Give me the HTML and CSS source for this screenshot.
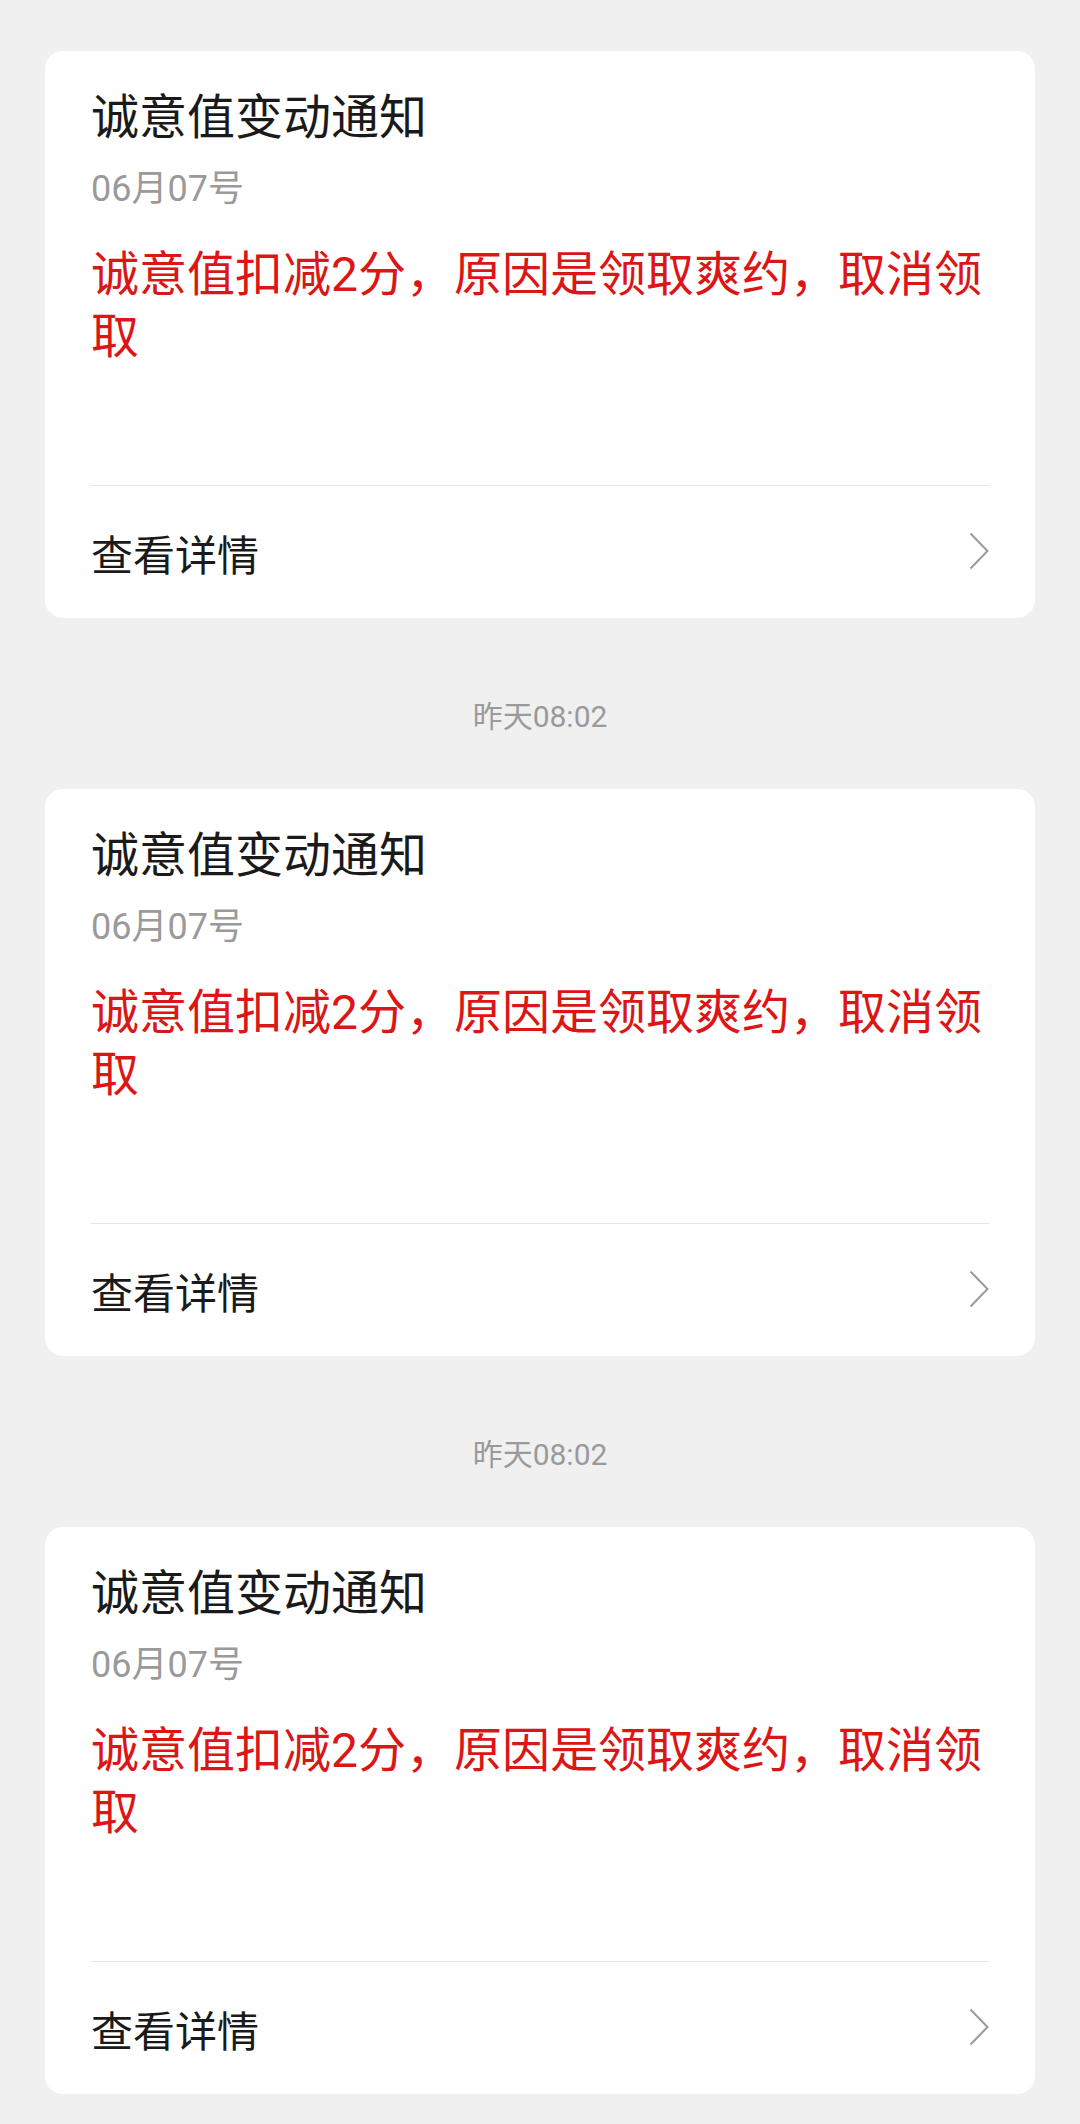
FILE: index.html
```html
<!DOCTYPE html>
<html lang="zh-CN">
<head>
<meta charset="utf-8">
<title>诚意值变动通知</title>
<link rel="stylesheet" href="styles.css">
</head>
<body>
<main class="list">
  <section class="card">
    <div class="card-body">
      <h2 class="title">诚意值变动通知</h2>
      <div class="date">06月07号</div>
      <p class="msg">诚意值扣减2分，原因是领取爽约，取消领取</p>
    </div>
    <div class="card-foot">
      <span class="more">查看详情</span>
      <svg class="chev" width="20" height="38" viewBox="0 0 20 38"><polyline points="1.5,1.5 18.5,19 1.5,36.5" fill="none" stroke="#9a9a9a" stroke-width="2"/></svg>
    </div>
  </section>
  <div class="time">昨天08:02</div>
  <section class="card">
    <div class="card-body">
      <h2 class="title">诚意值变动通知</h2>
      <div class="date">06月07号</div>
      <p class="msg">诚意值扣减2分，原因是领取爽约，取消领取</p>
    </div>
    <div class="card-foot">
      <span class="more">查看详情</span>
      <svg class="chev" width="20" height="38" viewBox="0 0 20 38"><polyline points="1.5,1.5 18.5,19 1.5,36.5" fill="none" stroke="#9a9a9a" stroke-width="2"/></svg>
    </div>
  </section>
  <div class="time">昨天08:02</div>
  <section class="card">
    <div class="card-body">
      <h2 class="title">诚意值变动通知</h2>
      <div class="date">06月07号</div>
      <p class="msg">诚意值扣减2分，原因是领取爽约，取消领取</p>
    </div>
    <div class="card-foot">
      <span class="more">查看详情</span>
      <svg class="chev" width="20" height="38" viewBox="0 0 20 38"><polyline points="1.5,1.5 18.5,19 1.5,36.5" fill="none" stroke="#9a9a9a" stroke-width="2"/></svg>
    </div>
  </section>
</main>
</body>
</html>
```
FILE: styles.css
```css
html, body {
  margin: 0;
  padding: 0;
  background: #f0f0f0;
}
body {
  font-family: Roboto, "Noto Sans CJK SC", sans-serif;
}
.list {
  padding: 51px 45px 0;
}
.card {
  background: #ffffff;
  border-radius: 18px;
  overflow: hidden;
}
.card-body {
  box-sizing: border-box;
  height: 434px;
  padding: 35px 46px 0;
}
.title {
  margin: 0;
  font-size: 48px;
  line-height: 64px;
  font-weight: 400;
  color: #1a1a1a;
}
.date {
  margin-top: 15px;
  font-size: 36px;
  line-height: 48px;
  color: #9a9a9a;
}
.msg {
  margin: 31px 0 0;
  font-size: 48px;
  line-height: 62px;
  color: #dc1616;
}
.card-foot {
  margin: 0 46px;
  height: 132px;
  border-top: 1px solid #e6e6e6;
  display: flex;
  align-items: center;
  justify-content: space-between;
}
.more {
  font-size: 42px;
  color: #1a1a1a;
}
.chev {
  display: block;
  margin-top: -2px;
}
.time {
  padding: 79px 0 52px;
  line-height: 40px;
  font-size: 30px;
  color: #9a9a9a;
  text-align: center;
}
```
